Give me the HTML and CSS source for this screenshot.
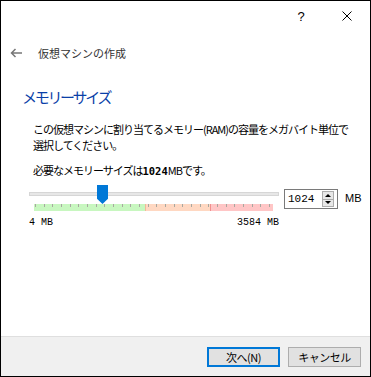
FILE: index.html
```html
<!DOCTYPE html>
<html lang="ja">
<head>
  <meta charset="UTF-8" />
  <title>仮想マシンの作成</title>
  <link rel="stylesheet" href="styles.css">
</head>
<body>
  <div class="window">
    <div class="titlebar">
      <button class="tb-btn help">?</button>
      <button class="tb-btn close">
        <svg width="10" height="10" viewBox="0 0 10 10"><path d="M0.5 0.5 L9.5 9.5 M9.5 0.5 L0.5 9.5" stroke="#000" stroke-width="1" fill="none"/></svg>
      </button>
    </div>

    <div class="nav">
      <svg class="back" width="12" height="10" viewBox="0 0 12 10"><path d="M12 5 H1.5 M5.5 1 L1.5 5 L5.5 9" stroke="#777" stroke-width="1.5" fill="none"/></svg>
      <span class="nav-title">仮想マシンの作成</span>
    </div>

    <div class="page">
      <h2 class="heading">メモリーサイズ</h2>
      <p class="desc">この仮想マシンに割り当てるメモリー(RAM)の容量をメガバイト単位で<br>選択してください。</p>
      <p class="desc rec">必要なメモリーサイズは<b>1024</b>MBです。</p>

      <div class="mem-row">
        <div class="slider">
          <div class="track"></div>
          <div class="thumb"></div>
          <div class="scale"></div>
          <div class="limits">
            <span>4 MB</span>
            <span>3584 MB</span>
          </div>
        </div>
        <div class="spinbox">
          <span class="spin-value">1024</span>
          <div class="spin-btns">
            <span class="spin up"></span>
            <span class="spin down"></span>
          </div>
        </div>
        <span class="unit">MB</span>
      </div>
    </div>

    <div class="footer">
      <button class="btn default">次へ(N)</button>
      <button class="btn">キャンセル</button>
    </div>
  </div>
</body>
</html>
```

FILE: styles.css
```css
body {
  margin: 0;
  font-family: "Noto Sans CJK JP", sans-serif;
  font-size: 11px;
  color: #000;
  background: #fff;
}

.window {
  width: 371px;
  height: 377px;
  box-sizing: border-box;
  border: 1px solid #000;
  display: flex;
  flex-direction: column;
  background: #fff;
}

.titlebar {
  height: 30px;
  display: flex;
  justify-content: flex-end;
}

.tb-btn {
  width: 46px;
  height: 30px;
  border: 0;
  background: transparent;
  padding: 0;
  display: flex;
  align-items: center;
  justify-content: center;
  font-family: "Liberation Sans", sans-serif;
  font-size: 13px;
}

.nav {
  height: 44px;
  display: flex;
  align-items: center;
  padding-left: 9px;
}

.nav-title {
  margin-left: 16px;
  font-size: 11px;
  color: #333;
}

.page {
  flex: 1;
  padding-left: 21px;
}

.heading {
  margin: 12px 0 0;
  font-size: 15px;
  font-weight: normal;
  letter-spacing: -2.3px;
  line-height: 20px;
  color: #0a3fa8;
}

.desc {
  margin: 14px 0 0 11px;
  font-size: 11px;
  line-height: 16px;
  letter-spacing: -1px;
}

.desc.rec {
  margin-top: 9px;
}

.desc b {
  font-family: "DejaVu Sans Mono", monospace;
  font-size: 10.5px;
  letter-spacing: 0;
}

.mem-row {
  margin-top: 6px;
  margin-left: 7px;
  display: flex;
  align-items: flex-start;
}

.slider {
  position: relative;
  width: 250px;
  padding-top: 7px;
}

.track {
  height: 2px;
  background: #e7e7e7;
  border: 1px solid #d6d6d6;
}

.thumb {
  position: absolute;
  left: 68px;
  top: 0;
  width: 11px;
  height: 19px;
  background: #0078d7;
  clip-path: polygon(0 0, 100% 0, 100% 72%, 50% 100%, 0 72%);
}

.scale {
  margin: 8px 0 0 5px;
  width: 239px;
  height: 7px;
  background:
    repeating-linear-gradient(to right, #a8a8a0 0 1px, transparent 1px 8.67px) 1px 0 / 100% 3px no-repeat,
    linear-gradient(to right, #c8f7c0 0 111px, #f2b89a 111px 112px, #ffd8c2 112px 176px, #f09090 176px 177px, #ffc6c6 177px);
}

.limits {
  margin-top: 7px;
  display: flex;
  justify-content: space-between;
  font-family: "Liberation Mono", monospace;
  font-size: 10px;
  line-height: 10px;
}

.spinbox {
  margin-left: 5px;
  margin-top: 4px;
  width: 54px;
  height: 20px;
  box-sizing: border-box;
  border: 1px solid #7a7a7a;
  display: flex;
  align-items: center;
  justify-content: space-between;
  padding: 0 3px 0 3px;
}

.spin-value {
  font-family: "Liberation Mono", monospace;
  font-size: 11px;
}

.spin-btns {
  display: flex;
  flex-direction: column;
  width: 12px;
  height: 16px;
  border: 1px solid #adadad;
  box-sizing: border-box;
  background: #e8e8e8;
}

.spin {
  flex: 1;
  display: flex;
  align-items: center;
  justify-content: center;
}

.spin::before {
  content: "";
  border-left: 3px solid transparent;
  border-right: 3px solid transparent;
}

.spin.up {
  border-bottom: 1px solid #adadad;
}

.spin.up::before {
  border-bottom: 3px solid #000;
}

.spin.down::before {
  border-top: 3px solid #000;
}

.unit {
  margin-left: 7px;
  margin-top: 7px;
  font-family: "Liberation Sans", sans-serif;
  font-size: 11px;
}

.footer {
  height: 40px;
  border-top: 1px solid #dfdfdf;
  background: #f0f0f0;
  display: flex;
  justify-content: flex-end;
  align-items: flex-start;
  gap: 8px;
  padding: 10px 9px 0 0;
  box-sizing: border-box;
}

.btn {
  width: 73px;
  height: 20px;
  box-sizing: border-box;
  background: #e1e1e1;
  border: 1px solid #adadad;
  font-family: "Noto Sans CJK JP", sans-serif;
  font-size: 11px;
  padding: 0;
  letter-spacing: -0.5px;
}

.btn.default {
  border: 2px solid #0078d7;
}
```
